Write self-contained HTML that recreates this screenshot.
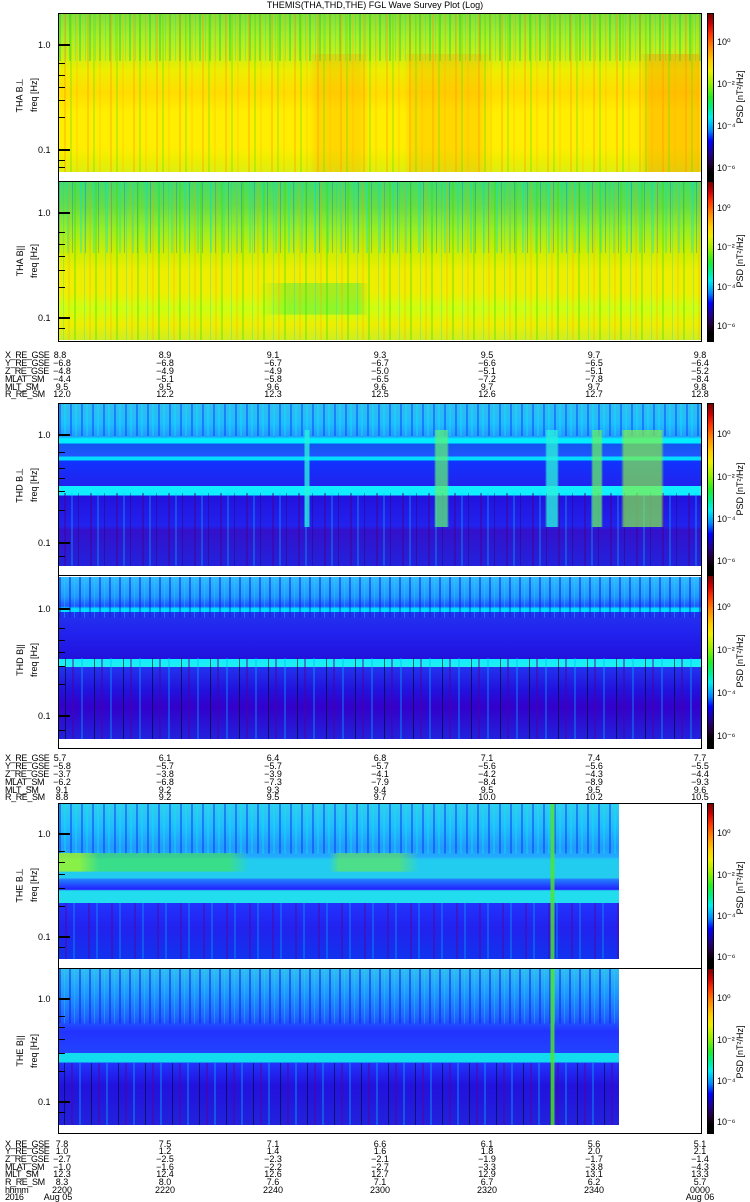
<!DOCTYPE html>
<html><head><meta charset="utf-8">
<style>
*{margin:0;padding:0;box-sizing:border-box}
body{width:750px;height:1200px;background:#fff;position:relative;overflow:hidden;font-family:"Liberation Sans",sans-serif;color:#000}
.a{position:absolute}
.box{position:absolute;border:1px solid #000;left:58px;width:644px}
.sp{position:absolute;left:59px}
.cb{position:absolute;left:707px;width:7px;border:1px solid #000;background:linear-gradient(180deg,#700 0,#c00 6%,#f30 12%,#f80 20%,#fc0 28%,#ee0 34%,#9e0 42%,#2e2 50%,#0e8 56%,#0ee 62%,#08f 70%,#00f 76%,#208 84%,#203 90%,#000 95%,#000 100%)}
.t{position:absolute;font-size:9px;line-height:9px;white-space:nowrap}
.rot{position:absolute;transform:rotate(-90deg);transform-origin:center;font-size:9px;white-space:nowrap;text-align:center;width:80px}
.tk{position:absolute;left:59px;width:11px;height:2px;background:#000}
.tk2{position:absolute;left:59px;width:6px;height:1px;background:#000}
.row{position:absolute;left:0;width:750px;height:9px}
.row span{position:absolute;font-size:9px;line-height:9px;transform:translateX(-50%)}
.row span.l{transform:none;left:5px;letter-spacing:-0.4px}
</style></head><body>

<div class="t" style="left:0;width:750px;text-align:center;top:1px">THEMIS(THA,THD,THE) FGL Wave Survey Plot (Log)</div>

<!-- PANEL 1 THA Bperp -->
<div class="sp" style="top:14px;width:642px;height:158px;background:
repeating-linear-gradient(90deg,transparent 0 5px,rgba(255,140,0,.3) 5px 7px,transparent 7px 11px,rgba(110,220,0,.35) 11px 13px,transparent 13px 17px,rgba(255,170,0,.2) 17px 19px,transparent 19px 23px),
linear-gradient(90deg,transparent 0 250px,rgba(255,140,0,.22) 258px 300px,transparent 310px 345px,rgba(255,140,0,.22) 352px 420px,transparent 435px 580px,rgba(255,120,0,.3) 590px 640px,transparent 642px) 0 100%/100% 75% no-repeat,
repeating-linear-gradient(90deg,rgba(0,210,80,.4) 0 2px,transparent 2px 6px,rgba(0,220,200,.3) 6px 7px,transparent 7px 10px) 0 0/100% 30% no-repeat,
linear-gradient(180deg,#8d3 0,#ae2 14%,#ce1 26%,#ee0 36%,#fd0 50%,#fe0 62%,#fe0 74%,#fe0 84%,#ee0 92%,#de1 100%)"></div>
<div class="box" style="top:13px;height:169px"></div>
<div class="tk" style="top:44px"></div><div class="tk" style="top:149px"></div>
<div class="tk2" style="top:63px"></div><div class="tk2" style="top:75px"></div><div class="tk2" style="top:87px"></div><div class="tk2" style="top:100px"></div><div class="tk2" style="top:117px"></div><div class="tk2" style="top:160px"></div><div class="tk2" style="top:167px"></div>
<div class="t" style="left:38px;top:41px">1.0</div><div class="t" style="left:38px;top:146px">0.1</div>
<div class="rot" style="left:-20px;top:90px">THA B⊥</div>
<div class="rot" style="left:-6px;top:90px">freq [Hz]</div>
<div class="cb" style="top:13px;height:169px"></div>

<!-- PANEL 2 THA B|| -->
<div class="sp" style="top:182px;width:642px;height:158px;background:
repeating-linear-gradient(90deg,transparent 0 4px,rgba(0,200,255,.25) 4px 5px,transparent 5px 9px,rgba(255,150,0,.2) 9px 11px,transparent 11px 15px,rgba(60,220,0,.35) 15px 17px,transparent 17px 21px),
repeating-linear-gradient(90deg,rgba(0,90,255,.3) 0 1px,transparent 1px 8px,rgba(0,230,220,.35) 8px 10px,transparent 10px 13px) 0 0/100% 45% no-repeat,
linear-gradient(90deg,transparent 0 200px,rgba(0,230,100,.3) 230px 300px,transparent 310px) 0 80%/100% 20% no-repeat,
linear-gradient(180deg,#4d6 0,#6d4 15%,#9e2 30%,#ce0 44%,#ee0 56%,#ee0 70%,#cf1 80%,#ee0 90%,#ce2 100%)"></div>
<div class="box" style="top:181px;height:161px"></div>
<div class="tk" style="top:212px"></div><div class="tk" style="top:317px"></div>
<div class="tk2" style="top:232px"></div><div class="tk2" style="top:244px"></div><div class="tk2" style="top:256px"></div><div class="tk2" style="top:270px"></div><div class="tk2" style="top:287px"></div><div class="tk2" style="top:328px"></div>
<div class="t" style="left:38px;top:209px">1.0</div><div class="t" style="left:38px;top:314px">0.1</div>
<div class="rot" style="left:-20px;top:256px">THA B||</div>
<div class="rot" style="left:-6px;top:256px">freq [Hz]</div>
<div class="cb" style="top:181px;height:161px"></div>

<div class="row" style="top:351px"><span class="l">X_RE_GSE</span><span style="left:60px">8.8</span><span style="left:165px">8.9</span><span style="left:273px">9.1</span><span style="left:380px">9.3</span><span style="left:487px">9.5</span><span style="left:594px">9.7</span><span style="left:700px">9.8</span></div>
<div class="row" style="top:359px"><span class="l">Y_RE_GSE</span><span style="left:62px">−6.8</span><span style="left:165px">−6.8</span><span style="left:273px">−6.7</span><span style="left:380px">−6.7</span><span style="left:487px">−6.6</span><span style="left:594px">−6.5</span><span style="left:700px">−6.4</span></div>
<div class="row" style="top:367px"><span class="l">Z_RE_GSE</span><span style="left:62px">−4.8</span><span style="left:165px">−4.9</span><span style="left:273px">−4.9</span><span style="left:380px">−5.0</span><span style="left:487px">−5.1</span><span style="left:594px">−5.1</span><span style="left:700px">−5.2</span></div>
<div class="row" style="top:375px"><span class="l">MLAT_SM</span><span style="left:62px">−4.4</span><span style="left:165px">−5.1</span><span style="left:273px">−5.8</span><span style="left:380px">−6.5</span><span style="left:487px">−7.2</span><span style="left:594px">−7.8</span><span style="left:700px">−8.4</span></div>
<div class="row" style="top:383px"><span class="l">MLT_SM</span><span style="left:62px">9.5</span><span style="left:165px">9.5</span><span style="left:273px">9.6</span><span style="left:380px">9.6</span><span style="left:487px">9.7</span><span style="left:594px">9.7</span><span style="left:700px">9.8</span></div>
<div class="row" style="top:390px"><span class="l">R_RE_SM</span><span style="left:62px">12.0</span><span style="left:165px">12.2</span><span style="left:273px">12.3</span><span style="left:380px">12.5</span><span style="left:487px">12.6</span><span style="left:594px">12.7</span><span style="left:700px">12.8</span></div>

<!-- PANEL 3 THD Bperp -->
<div class="sp" style="top:404px;width:642px;height:162px;background:
linear-gradient(90deg,transparent 0 245px,rgba(40,240,220,.8) 246px 250px,transparent 251px 375px,rgba(90,240,120,.75) 377px 388px,transparent 390px 486px,rgba(40,240,220,.8) 488px 498px,transparent 500px 532px,rgba(100,240,100,.75) 534px 542px,transparent 544px 562px,rgba(130,240,70,.7) 565px 602px,transparent 605px) 0 40%/100% 60% no-repeat,
repeating-linear-gradient(90deg,transparent 0 5px,rgba(70,0,140,.45) 5px 7px,transparent 7px 12px,rgba(0,200,255,.3) 12px 14px,transparent 14px 19px,rgba(40,0,100,.4) 19px 20px,transparent 20px 26px) 0 100%/100% 45% no-repeat,
repeating-linear-gradient(90deg,rgba(0,60,255,.45) 0 2px,transparent 2px 5px,rgba(0,240,240,.35) 5px 7px,transparent 7px 11px) 0 0/100% 20% no-repeat,
linear-gradient(180deg,#3be 0,#2bf 12%,#29f 20%,#0ef 21.5%,#0ef 24.5%,#15e 24.5%,#25f 32.5%,#0df 32.5%,#0df 35%,#13f 35%,#22e 50.5%,#1ef 50.5%,#1ef 56.5%,#21d 56.5%,#22e 75%,#31c 78%,#22d 100%)"></div>
<div class="box" style="top:403px;height:173px"></div>
<div class="tk" style="top:434px"></div><div class="tk" style="top:542px"></div>
<div class="tk2" style="top:452px"></div><div class="tk2" style="top:468px"></div><div class="tk2" style="top:478px"></div><div class="tk2" style="top:491px"></div><div class="tk2" style="top:510px"></div><div class="tk2" style="top:556px"></div>
<div class="t" style="left:38px;top:431px">1.0</div><div class="t" style="left:38px;top:539px">0.1</div>
<div class="rot" style="left:-20px;top:480px">THD B⊥</div>
<div class="rot" style="left:-6px;top:480px">freq [Hz]</div>
<div class="cb" style="top:403px;height:173px"></div>

<!-- PANEL 4 THD B|| -->
<div class="sp" style="top:577px;width:642px;height:162px;background:
repeating-linear-gradient(90deg,transparent 0 6px,rgba(0,0,0,.55) 6px 7px,transparent 7px 13px,rgba(80,0,150,.45) 13px 15px,transparent 15px 22px,rgba(0,180,255,.35) 22px 24px,transparent 24px 29px) 0 100%/100% 50% no-repeat,
repeating-linear-gradient(90deg,rgba(0,40,230,.5) 0 2px,transparent 2px 5px,rgba(0,230,255,.35) 5px 6px,transparent 6px 10px) 0 0/100% 25% no-repeat,
linear-gradient(180deg,#3bf 0,#29f 12%,#25f 18%,#0df 19.5%,#0df 21.5%,#23e 21.5%,#22e 35%,#21d 50.5%,#1ef 50.5%,#2ee 55.5%,#23e 55.5%,#21d 70%,#30c 80%,#22d 100%)"></div>
<div class="box" style="top:575px;height:174px"></div>
<div class="tk" style="top:608px"></div><div class="tk" style="top:715px"></div>
<div class="tk2" style="top:628px"></div><div class="tk2" style="top:640px"></div><div class="tk2" style="top:652px"></div><div class="tk2" style="top:666px"></div><div class="tk2" style="top:684px"></div><div class="tk2" style="top:730px"></div>
<div class="t" style="left:38px;top:605px">1.0</div><div class="t" style="left:38px;top:712px">0.1</div>
<div class="rot" style="left:-20px;top:655px">THD B||</div>
<div class="rot" style="left:-6px;top:655px">freq [Hz]</div>
<div class="cb" style="top:575px;height:174px"></div>

<div class="row" style="top:754px"><span class="l">X_RE_GSE</span><span style="left:60px">5.7</span><span style="left:165px">6.1</span><span style="left:273px">6.4</span><span style="left:380px">6.8</span><span style="left:487px">7.1</span><span style="left:594px">7.4</span><span style="left:700px">7.7</span></div>
<div class="row" style="top:762px"><span class="l">Y_RE_GSE</span><span style="left:62px">−5.8</span><span style="left:165px">−5.7</span><span style="left:273px">−5.7</span><span style="left:380px">−5.7</span><span style="left:487px">−5.6</span><span style="left:594px">−5.6</span><span style="left:700px">−5.5</span></div>
<div class="row" style="top:770px"><span class="l">Z_RE_GSE</span><span style="left:62px">−3.7</span><span style="left:165px">−3.8</span><span style="left:273px">−3.9</span><span style="left:380px">−4.1</span><span style="left:487px">−4.2</span><span style="left:594px">−4.3</span><span style="left:700px">−4.4</span></div>
<div class="row" style="top:778px"><span class="l">MLAT_SM</span><span style="left:62px">−6.2</span><span style="left:165px">−6.8</span><span style="left:273px">−7.3</span><span style="left:380px">−7.9</span><span style="left:487px">−8.4</span><span style="left:594px">−8.9</span><span style="left:700px">−9.3</span></div>
<div class="row" style="top:786px"><span class="l">MLT_SM</span><span style="left:62px">9.1</span><span style="left:165px">9.2</span><span style="left:273px">9.3</span><span style="left:380px">9.4</span><span style="left:487px">9.5</span><span style="left:594px">9.5</span><span style="left:700px">9.6</span></div>
<div class="row" style="top:793px"><span class="l">R_RE_SM</span><span style="left:62px">8.8</span><span style="left:165px">9.2</span><span style="left:273px">9.5</span><span style="left:380px">9.7</span><span style="left:487px">10.0</span><span style="left:594px">10.2</span><span style="left:700px">10.5</span></div>

<!-- PANEL 5 THE Bperp -->
<div class="sp" style="top:804px;width:560px;height:155px;background:
linear-gradient(90deg,transparent 0 491px,rgba(80,230,40,.8) 492px 495px,transparent 496px),
linear-gradient(90deg,rgba(180,255,0,.7) 0 20px,rgba(80,240,40,.5) 40px 170px,transparent 190px 270px,rgba(120,240,40,.5) 280px 340px,transparent 360px) 0 36%/100% 12% no-repeat,
repeating-linear-gradient(90deg,transparent 0 6px,rgba(90,0,150,.4) 6px 8px,transparent 8px 14px,rgba(0,190,255,.3) 14px 16px,transparent 16px 23px) 0 100%/100% 36% no-repeat,
repeating-linear-gradient(90deg,rgba(0,50,240,.45) 0 2px,transparent 2px 5px,rgba(0,240,230,.35) 5px 7px,transparent 7px 11px) 0 0/100% 32% no-repeat,
linear-gradient(180deg,#3ce 0,#2bf 15%,#29f 28%,#2af 34%,#2ce 36%,#2ce 48%,#28f 48%,#22f 55%,#2de 56%,#2de 64%,#23f 64%,#22e 80%,#13e 100%)"></div>
<div class="box" style="top:803px;height:166px"></div>
<div class="tk" style="top:833px"></div><div class="tk" style="top:936px"></div>
<div class="tk2" style="top:851px"></div><div class="tk2" style="top:862px"></div><div class="tk2" style="top:874px"></div><div class="tk2" style="top:888px"></div><div class="tk2" style="top:906px"></div><div class="tk2" style="top:947px"></div>
<div class="t" style="left:38px;top:830px">1.0</div><div class="t" style="left:38px;top:933px">0.1</div>
<div class="rot" style="left:-20px;top:880px">THE B⊥</div>
<div class="rot" style="left:-6px;top:880px">freq [Hz]</div>
<div class="cb" style="top:803px;height:166px"></div>

<!-- PANEL 6 THE B|| -->
<div class="sp" style="top:969px;width:560px;height:156px;background:
linear-gradient(90deg,transparent 0 491px,rgba(80,230,40,.8) 492px 495px,transparent 496px),
repeating-linear-gradient(90deg,transparent 0 5px,rgba(0,0,0,.5) 5px 6px,transparent 6px 12px,rgba(90,0,150,.45) 12px 14px,transparent 14px 20px,rgba(0,190,255,.35) 20px 22px,transparent 22px 27px) 0 100%/100% 40% no-repeat,
repeating-linear-gradient(90deg,rgba(0,40,230,.5) 0 2px,transparent 2px 5px,rgba(0,230,255,.35) 5px 6px,transparent 6px 10px) 0 0/100% 35% no-repeat,
linear-gradient(180deg,#3be 0,#29f 15%,#26f 30%,#23f 40%,#24f 54%,#1de 54%,#1de 60%,#23f 60%,#21d 75%,#22d 100%)"></div>
<div class="box" style="top:968px;height:166px"></div>
<div class="tk" style="top:998px"></div><div class="tk" style="top:1101px"></div>
<div class="tk2" style="top:1016px"></div><div class="tk2" style="top:1027px"></div><div class="tk2" style="top:1039px"></div><div class="tk2" style="top:1053px"></div><div class="tk2" style="top:1071px"></div><div class="tk2" style="top:1112px"></div>
<div class="t" style="left:38px;top:995px">1.0</div><div class="t" style="left:38px;top:1098px">0.1</div>
<div class="rot" style="left:-20px;top:1046px">THE B||</div>
<div class="rot" style="left:-6px;top:1046px">freq [Hz]</div>
<div class="cb" style="top:968px;height:166px"></div>

<!-- colorbar labels -->
<div class="t" style="left:717px;top:38px">10⁰</div><div class="t" style="left:717px;top:80px">10⁻²</div><div class="t" style="left:717px;top:122px">10⁻⁴</div><div class="t" style="left:717px;top:164px">10⁻⁶</div>
<div class="rot" style="left:700px;top:92px">PSD [nT²/Hz]</div>
<div class="t" style="left:717px;top:204px">10⁰</div><div class="t" style="left:717px;top:243px">10⁻²</div><div class="t" style="left:717px;top:283px">10⁻⁴</div><div class="t" style="left:717px;top:322px">10⁻⁶</div>
<div class="rot" style="left:700px;top:256px">PSD [nT²/Hz]</div>
<div class="t" style="left:717px;top:430px">10⁰</div><div class="t" style="left:717px;top:473px">10⁻²</div><div class="t" style="left:717px;top:515px">10⁻⁴</div><div class="t" style="left:717px;top:557px">10⁻⁶</div>
<div class="rot" style="left:700px;top:484px">PSD [nT²/Hz]</div>
<div class="t" style="left:717px;top:603px">10⁰</div><div class="t" style="left:717px;top:646px">10⁻²</div><div class="t" style="left:717px;top:689px">10⁻⁴</div><div class="t" style="left:717px;top:732px">10⁻⁶</div>
<div class="rot" style="left:700px;top:656px">PSD [nT²/Hz]</div>
<div class="t" style="left:717px;top:829px">10⁰</div><div class="t" style="left:717px;top:871px">10⁻²</div><div class="t" style="left:717px;top:912px">10⁻⁴</div><div class="t" style="left:717px;top:953px">10⁻⁶</div>
<div class="rot" style="left:700px;top:883px">PSD [nT²/Hz]</div>
<div class="t" style="left:717px;top:994px">10⁰</div><div class="t" style="left:717px;top:1036px">10⁻²</div><div class="t" style="left:717px;top:1077px">10⁻⁴</div><div class="t" style="left:717px;top:1118px">10⁻⁶</div>
<div class="rot" style="left:700px;top:1047px">PSD [nT²/Hz]</div>

<div class="row" style="top:1140px"><span class="l">X_RE_GSE</span><span style="left:62px">7.8</span><span style="left:165px">7.5</span><span style="left:273px">7.1</span><span style="left:380px">6.6</span><span style="left:487px">6.1</span><span style="left:594px">5.6</span><span style="left:700px">5.1</span></div>
<div class="row" style="top:1147px"><span class="l">Y_RE_GSE</span><span style="left:62px">1.0</span><span style="left:165px">1.2</span><span style="left:273px">1.4</span><span style="left:380px">1.6</span><span style="left:487px">1.8</span><span style="left:594px">2.0</span><span style="left:700px">2.1</span></div>
<div class="row" style="top:1155px"><span class="l">Z_RE_GSE</span><span style="left:62px">−2.7</span><span style="left:165px">−2.5</span><span style="left:273px">−2.3</span><span style="left:380px">−2.1</span><span style="left:487px">−1.9</span><span style="left:594px">−1.7</span><span style="left:700px">−1.4</span></div>
<div class="row" style="top:1163px"><span class="l">MLAT_SM</span><span style="left:62px">−1.0</span><span style="left:165px">−1.6</span><span style="left:273px">−2.2</span><span style="left:380px">−2.7</span><span style="left:487px">−3.3</span><span style="left:594px">−3.8</span><span style="left:700px">−4.3</span></div>
<div class="row" style="top:1170px"><span class="l">MLT_SM</span><span style="left:62px">12.3</span><span style="left:165px">12.4</span><span style="left:273px">12.6</span><span style="left:380px">12.7</span><span style="left:487px">12.9</span><span style="left:594px">13.1</span><span style="left:700px">13.3</span></div>
<div class="row" style="top:1178px"><span class="l">R_RE_SM</span><span style="left:62px">8.3</span><span style="left:165px">8.0</span><span style="left:273px">7.6</span><span style="left:380px">7.1</span><span style="left:487px">6.7</span><span style="left:594px">6.2</span><span style="left:700px">5.7</span></div>
<div class="row" style="top:1186px"><span class="l">hhmm</span><span style="left:62px">2200</span><span style="left:165px">2220</span><span style="left:273px">2240</span><span style="left:380px">2300</span><span style="left:487px">2320</span><span style="left:594px">2340</span><span style="left:700px">0000</span></div>
<div class="row" style="top:1193px"><span class="l">2016</span><span style="left:58px">Aug 05</span><span style="left:700px">Aug 06</span></div>

</body></html>
